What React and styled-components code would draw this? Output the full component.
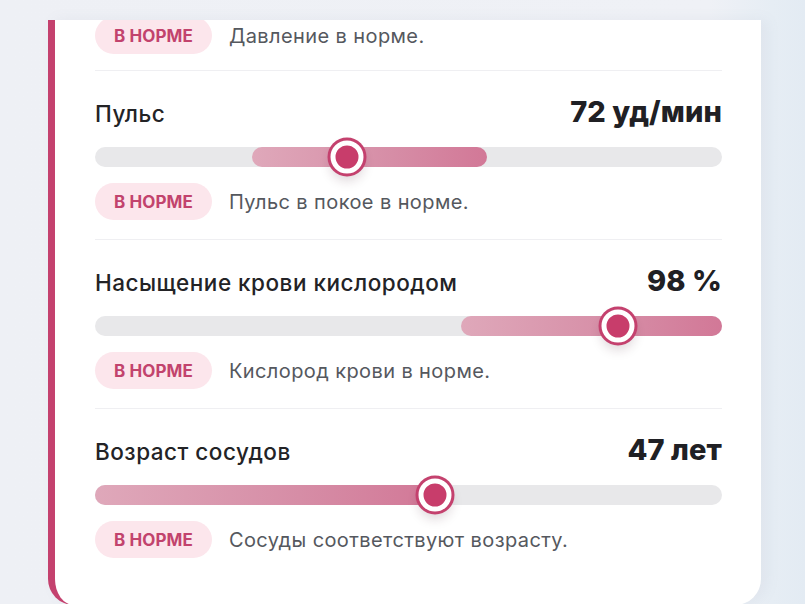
import React from 'react'
import styled, { createGlobalStyle } from 'styled-components'

const GlobalStyle = createGlobalStyle`
  html, body {
    margin: 0;
    height: 100%;
    overflow: hidden;
  }
  body {
    font-family: Inter, "Noto Sans", "Liberation Sans", sans-serif;
    background: linear-gradient(90deg, #eef0f5 0%, #eff1f6 88%, #e6edf4 96%, #e3ebf3 100%);
  }
`

const metrics = [
  {
    title: 'Пульс',
    value: '72 уд/мин',
    from: 25,
    to: 62.5,
    thumb: 40.2,
    note: 'Пульс в покое в норме.',
  },
  {
    title: 'Насыщение крови кислородом',
    value: '98 %',
    from: 58.4,
    to: 100,
    thumb: 83.4,
    note: 'Кислород крови в норме.',
  },
  {
    title: 'Возраст сосудов',
    value: '47 лет',
    from: 0,
    to: 54.2,
    thumb: 54.2,
    note: 'Сосуды соответствуют возрасту.',
  },
]

function App() {
  return (
    <>
      <GlobalStyle />
      <Page>
        <Card>
          <Status className='first'>
            <Badge>В норме</Badge>
            <Note>Давление в норме.</Note>
          </Status>
          {metrics.map((m) => (
            <Metric key={m.title}>
              <Header>
                <Title>{m.title}</Title>
                <Value>{m.value}</Value>
              </Header>
              <Track>
                <Fill style={{ left: `${m.from}%`, width: `${m.to - m.from}%` }} />
                <Thumb style={{ left: `${m.thumb}%` }} />
              </Track>
              <Status>
                <Badge>В норме</Badge>
                <Note>{m.note}</Note>
              </Status>
            </Metric>
          ))}
        </Card>
      </Page>
    </>
  )
}

export default App

const Page = styled.div`
  height: 604px;
  padding: 20px 0 0 48px;
  box-sizing: border-box;
  overflow: hidden;
`

const Card = styled.section`
  width: 713px;
  box-sizing: border-box;
  background: #ffffff;
  border-left: 7px solid #c4416e;
  border-radius: 0 0 26px 26px;
  padding: 0 39px 28px 40px;
  overflow: hidden;
  box-shadow: 6px 0 14px rgba(120, 130, 150, 0.08);
`

const Metric = styled.div`
  border-top: 1px solid #efeff2;
  padding: 23px 0 19px;
`

const Header = styled.div`
  display: flex;
  justify-content: space-between;
  align-items: baseline;
  height: 32px;
`

const Title = styled.span`
  font-size: 22.5px;
  font-weight: 500;
  color: #232326;
  letter-spacing: 0.5px;
`

const Value = styled.span`
  font-size: 29px;
  font-weight: 800;
  color: #202024;
  letter-spacing: 0.1px;
`

const Track = styled.div`
  position: relative;
  height: 20px;
  margin: 21px 0 16px;
  border-radius: 10px;
  background: #e8e8ea;
`

const Fill = styled.div`
  position: absolute;
  top: 0;
  bottom: 0;
  border-radius: 10px;
  background: linear-gradient(90deg, #dfa8ba 0%, #d68da6 60%, #d27897 100%);
`

const Thumb = styled.div`
  position: absolute;
  top: 50%;
  width: 33px;
  height: 33px;
  box-sizing: border-box;
  border-radius: 50%;
  background: #c83d6b;
  border: 5px solid #ffffff;
  box-shadow: 0 0 0 3px #c4416e, 0 7px 12px rgba(60, 20, 40, 0.18);
  transform: translate(-50%, -50%);
`

const Status = styled.div`
  display: flex;
  align-items: center;
  gap: 17px;
  &.first {
    margin-top: -3px;
    padding-bottom: 16px;
  }
`

const Badge = styled.span`
  display: inline-flex;
  align-items: center;
  height: 37px;
  padding: 0 19px;
  border-radius: 19px;
  background: #fce6ec;
  color: #c2436d;
  font-size: 17px;
  font-weight: 700;
  text-transform: uppercase;
  letter-spacing: 0.1px;
`

const Note = styled.span`
  font-size: 20px;
  color: #55585e;
  letter-spacing: 0.4px;
`
